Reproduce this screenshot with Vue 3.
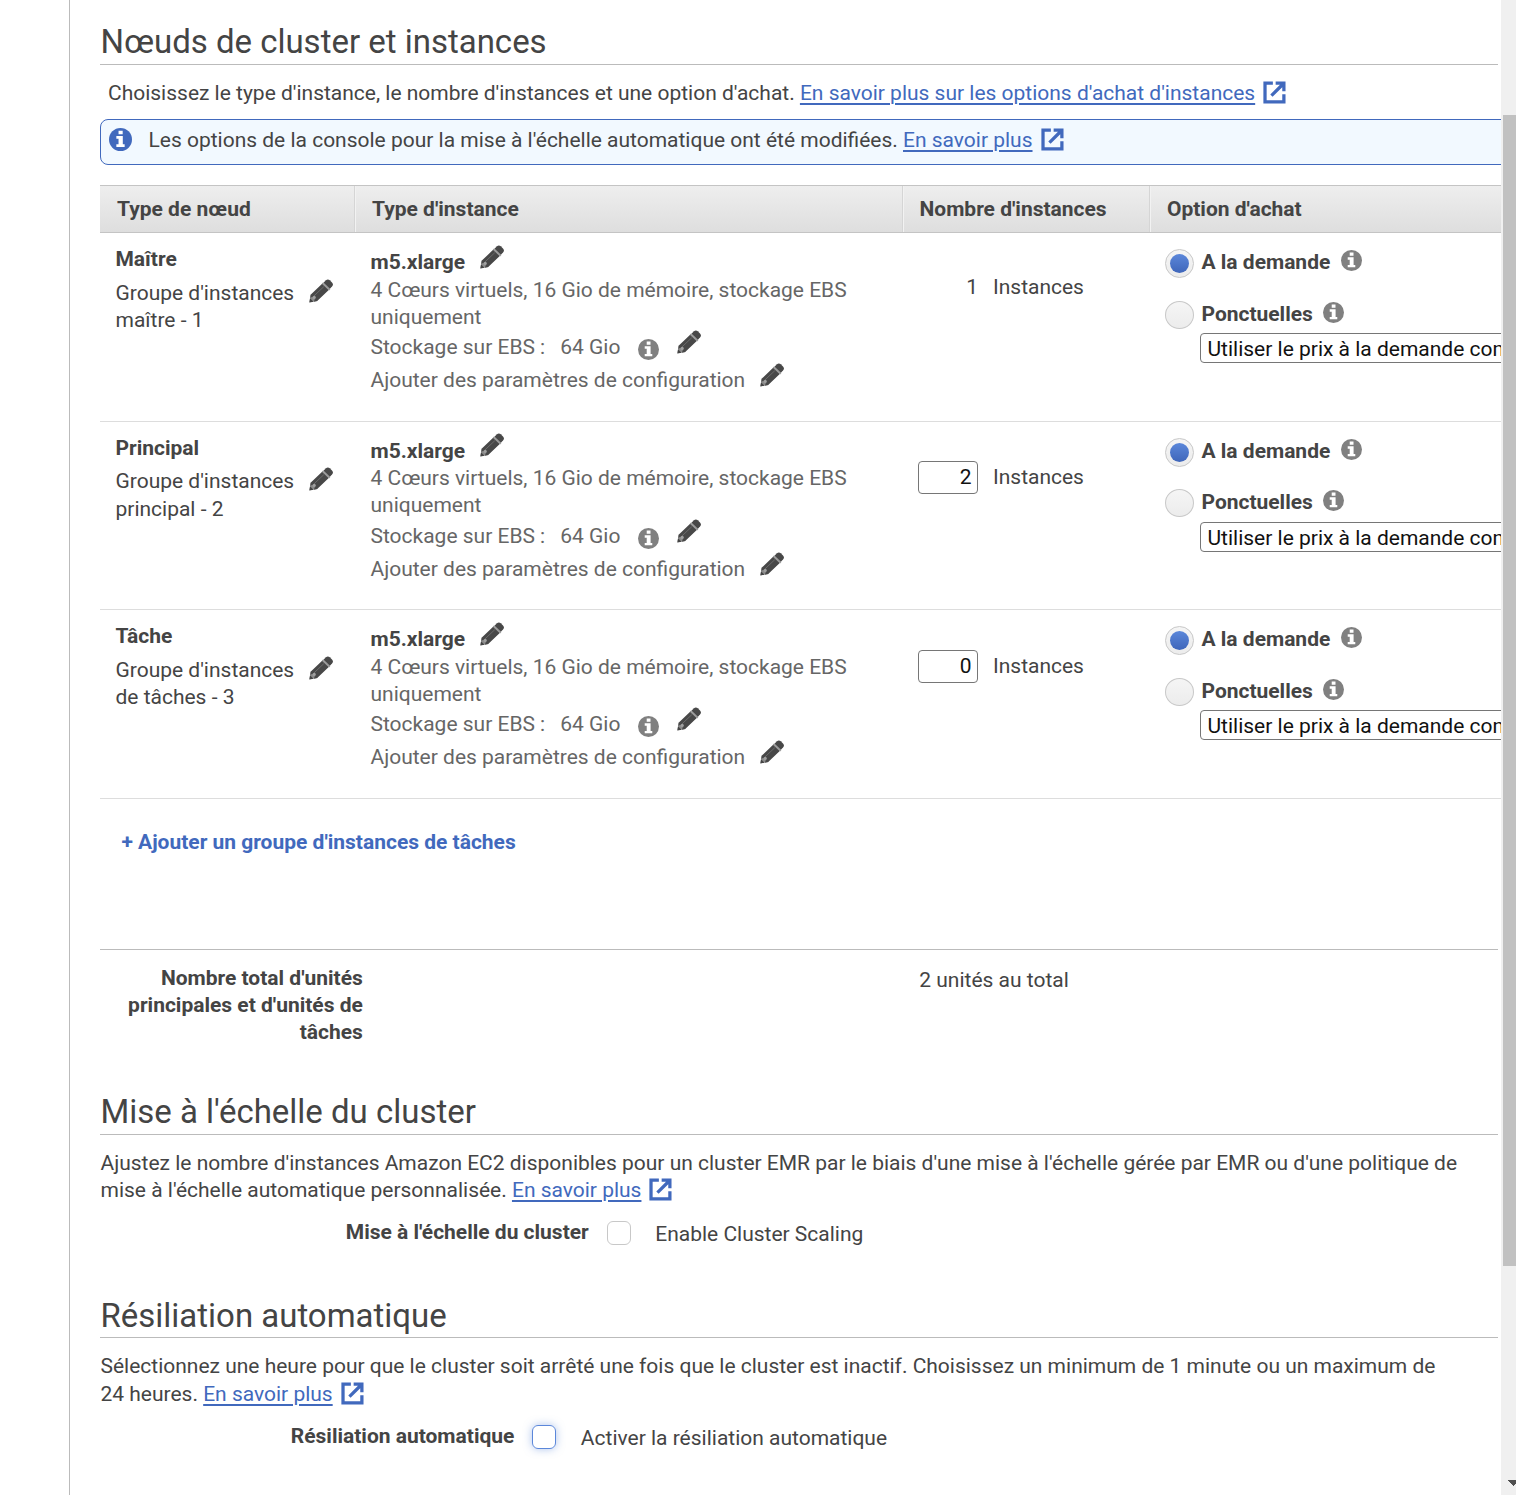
<script setup>
import { h } from 'vue'

const Pencil = () =>
  h('svg', { class: 'pencil', viewBox: '0 0 24 24', width: 24, height: 24 }, [
    h('path', { d: 'M0.5 23.3 1.8 15.6 8.6 22Z', fill: '#8a8a8a' }),
    h('path', { d: 'M0.3 23.5 1 19.2 4.5 22.7Z', fill: '#444' }),
    h('path', { d: 'M1.6 15.8 13.4 4.6 20 10.8 8.2 22 4.8 22.7 5.8 20.2 3.2 17.7 1.2 19Z', fill: '#484848' }),
    h('path', { d: 'M14.4 3.7 17 1.2Q18.9-.3 20.8 1.3L23 3.4Q24.7 5.2 23.2 7.3L20.7 9.9Z', fill: '#484848' }),
    h('path', { d: 'M13.4 4.2 20.7 10.8', stroke: '#999', 'stroke-width': 1.8 }),
    h('path', { d: 'M5 16.9 14.8 7.7', stroke: '#6a6a6a', 'stroke-width': 1 }),
    h('circle', { cx: 5.2, cy: 18.4, r: 1.6, fill: '#a0a0a0' }),
  ])

const Info = (props) =>
  h('svg', { class: 'info', viewBox: '0 0 20 20', width: props.size || 21, height: props.size || 21 }, [
    h('circle', { cx: 10, cy: 10, r: 10, fill: props.color || '#808080' }),
    h('path', { d: 'M8.3 2.3h3.6v3.1H8.3zM6.4 7h5.6v7.2h1.6v2.3H6.4v-2.3h1.9V9.3H6.4z', fill: '#fff' }),
  ])
Info.props = ['size', 'color']

const External = () =>
  h('svg', { class: 'external', viewBox: '0 0 24 24', width: 23, height: 23 }, [
    h('path', { d: 'M10.3 2.2H2.1V21.9H21.8V13.8', fill: 'none', stroke: '#4169bd', 'stroke-width': 3.4 }),
    h('path', { d: 'M13.2.5H23.5V10.8H20.1V6.4L10 16.5 7.6 14.1 17.7 4H13.2Z', fill: '#4169bd' }),
  ])

const columns = ["Type de nœud", "Type d'instance", "Nombre d'instances", "Option d'achat"]
const rows = [
  { name: 'Maître', group: "Groupe d'instances maître - 1", count: 1, fixed: true },
  { name: 'Principal', group: "Groupe d'instances principal - 2", count: 2 },
  { name: 'Tâche', group: "Groupe d'instances de tâches - 3", count: 0 },
]
</script>

<template>
  <div class="page">
    <main class="content">
      <h2>Nœuds de cluster et instances</h2>
      <p class="intro">Choisissez le type d'instance, le nombre d'instances et une option d'achat. <a>En savoir plus sur les options d'achat d'instances</a><External /></p>
      <div class="notice">
        <Info :size="23" color="#4169bd" />
        <p>Les options de la console pour la mise à l'échelle automatique ont été modifiées. <a>En savoir plus</a><External /></p>
      </div>

      <div class="table">
        <div class="grid head">
          <div v-for="c in columns" :key="c" class="th">{{ c }}</div>
        </div>
        <div v-for="r in rows" :key="r.name" class="grid row">
          <div class="node">
            <b>{{ r.name }}</b>
            <div class="group"><span>{{ r.group }}</span><Pencil /></div>
          </div>
          <div class="type">
            <div class="line model"><b>m5.xlarge</b><Pencil /></div>
            <div class="specs">4 Cœurs virtuels, 16 Gio de mémoire, stockage EBS uniquement</div>
            <div class="line storage"><span>Stockage sur EBS :</span><span class="size">64 Gio</span><Info /><Pencil /></div>
            <div class="line config"><span>Ajouter des paramètres de configuration</span><Pencil /></div>
          </div>
          <div class="count" :class="{ fixed: r.fixed }">
            <span v-if="r.fixed" class="num">{{ r.count }}</span>
            <span v-else class="num field">{{ r.count }}</span>
            <span class="unit">Instances</span>
          </div>
          <div class="option">
            <div class="choice"><i class="radio on"></i><b>A la demande</b><Info /></div>
            <div class="choice second"><i class="radio"></i><b>Ponctuelles</b><Info /></div>
            <div class="select">Utiliser le prix à la demande comme prix maximum</div>
          </div>
        </div>
      </div>

      <div class="add">+ Ajouter un groupe d'instances de tâches</div>

      <div class="totals">
        <b>Nombre total d'unités principales et d'unités de tâches</b>
        <span>2 unités au total</span>
      </div>

      <h2 class="scaling">Mise à l'échelle du cluster</h2>
      <p class="text">Ajustez le nombre d'instances Amazon EC2 disponibles pour un cluster EMR par le biais d'une mise à l'échelle gérée par EMR ou d'une politique de<br>mise à l'échelle automatique personnalisée. <a>En savoir plus</a><External /></p>
      <div class="check first"><b>Mise à l'échelle du cluster</b><i class="box"></i><span>Enable Cluster Scaling</span></div>

      <h2 class="ending">Résiliation automatique</h2>
      <p class="text lower">Sélectionnez une heure pour que le cluster soit arrêté une fois que le cluster est inactif. Choisissez un minimum de 1 minute ou un maximum de<br>24 heures. <a>En savoir plus</a><External /></p>
      <div class="check last"><b>Résiliation automatique</b><i class="box focus"></i><span>Activer la résiliation automatique</span></div>
    </main>
    <aside class="scrollbar">
      <div class="thumb"></div>
      <svg class="arrow" width="9" height="6" viewBox="0 0 9 6" shape-rendering="crispEdges"><path d="M0 0H9V3L6 6Z" fill="#505050" /></svg>
    </aside>
  </div>
</template>

<style>
body { overflow: hidden; background: #fff; }
</style>

<style scoped>
.page { display: flex; width: 1516px; height: 1495px; overflow: hidden; font: 20.993px/27.3px Roboto, sans-serif; color: #444; }
p, h2 { margin: 0; }
a { color: #4169bd; text-decoration: underline; text-decoration-thickness: 2px; text-underline-offset: 3px; }
b { font-weight: 700; }
svg { display: block; flex: none; }
.content { box-sizing: border-box; width: 1432px; margin-left: 69px; height: 1495px; border-left: 1px solid #bbb; padding-left: 30px; overflow: hidden; white-space: nowrap; }
h2 { box-sizing: border-box; width: 1398px; height: 65px; padding: 22px 0 0 0.5px; font-size: 32.97px; line-height: 40px; font-weight: 400; border-bottom: 1px solid #bbb; }
.external { display: inline-block; vertical-align: -4px; margin-left: 8px; }
.intro { height: 27px; padding: 15px 0 12px 8px; }
.notice { box-sizing: border-box; display: flex; width: 1410px; height: 46px; border: 1px solid #4169bd; border-radius: 8px; background: #f2f9ff; padding: 7px 8px 0; }
.notice .info { margin: 1.4px 16.5px 0 0; }
.table { width: 1410px; margin-top: 20px; }
.grid { display: grid; grid-template-columns: 255px 548px 247px 360px; }
.head { box-sizing: border-box; height: 48px; border-top: 1px solid #c4c4c4; border-bottom: 1px solid #c4c4c4; background: linear-gradient(#eee, #dedede); font-weight: 700; }
.th { padding: 10px 0 0 16px; border-left: 1px solid #f2f2f2; box-shadow: -1px 0 #d5d5d5; }
.th:nth-child(3) { padding-left: 15.5px; }
.th:first-child { border-left-color: transparent; box-shadow: none; }
.row { box-sizing: border-box; height: 188.5px; border-bottom: 1px solid #ddd; }
.node { padding: 13.3px 0 0 15.5px; }
.group { display: flex; margin-top: 6.2px; }
.group span { width: 193.5px; white-space: normal; }
.group .pencil { margin-top: -1px; }
.type { padding: 16.3px 0 0 15.5px; color: #666; }
.type b { color: #444; }
.line { display: flex; height: 27px; }
.model .pencil { margin: -4.5px 0 0 15px; }
.specs { width: 500px; white-space: normal; margin-top: 0.5px; line-height: 27px; padding-top: 0.1px; }
.storage { margin-top: 3.2px; }
.size { margin-left: 15px; }
.storage .info { margin: 5px 0 0 17.5px; }
.storage .pencil { margin: -4px 0 0 18.3px; }
.config { margin-top: 6px; }
.config .pencil { margin: -4px 0 0 15px; }
.count { display: flex; align-items: flex-start; padding: 39.9px 0 0 15px; line-height: 33px; }
.count.fixed { padding-top: 37.5px; }
.num { box-sizing: border-box; width: 60px; margin-right: 15px; text-align: right; }
.field { height: 33px; border: 1px solid #767676; border-radius: 4px; color: #111; line-height: 31.6px; padding-right: 5.5px; }
.field + .unit { line-height: 33.6px; }
.option { padding: 16px 0 0 15px; }
.choice { display: flex; height: 29px; }
.choice b { margin-left: 7.5px; }
.choice .info { margin: 1px 0 0 11px; }
.choice.second .info { margin-left: 10.2px; }
.second { margin-top: 22.6px; }
.radio { box-sizing: border-box; display: flex; align-items: center; justify-content: center; width: 29px; height: 29px; border: 1px solid #c8c8c8; border-radius: 50%; background: linear-gradient(#f5f5f5, #ececec); }
.second .radio { height: 28px; }
.radio.on::after { content: ''; width: 19px; height: 19px; border-radius: 50%; background: linear-gradient(#5b87da, #3f66ba); }
.select { box-sizing: border-box; width: 400px; height: 30px; margin: 3.7px 0 0 35px; padding-left: 6.5px; border: 1px solid #767676; border-radius: 4px; line-height: 30px; color: #111; }
.add { padding: 30px 0 93px 21.4px; height: 27px; font-weight: 700; color: #4169bd; }
.totals { box-sizing: border-box; display: flex; width: 1398px; height: 126px; border-top: 1px solid #bbb; padding-top: 15px; }
.totals b { width: 262.8px; white-space: normal; text-align: right; }
.totals span { margin: 2px 0 0 556.5px; }
.scaling { height: 60px; padding-top: 17px; }
.text { padding: 15px 0 0 0.5px; height: 54.5px; }
.lower { padding-top: 15.3px; height: 54.2px; }
.text .external { margin-top: -4px; }
.check { display: flex; height: 27px; }
.box { box-sizing: border-box; width: 24px; height: 24px; margin: 2px 24.5px 0 18px; border: 1px solid #c8c8c8; border-radius: 6px; }
.box.focus { border-color: #5b87da; box-shadow: 0 0 9px rgba(91, 135, 218, .5); }
.check span { padding-top: 2px; }
.first { margin: 15px 0 0 245.8px; }
.last { margin: 15.7px 0 0 190.8px; }
.ending { height: 92px; padding-top: 50px; }
.scrollbar { display: flow-root; width: 15px; height: 1495px; background: #f0f0f0; }
.thumb { margin: 115px 0 0 2px; height: 1151px; background: #c1c1c1; }
.arrow { margin: 214px 0 0 6px; }
</style>
